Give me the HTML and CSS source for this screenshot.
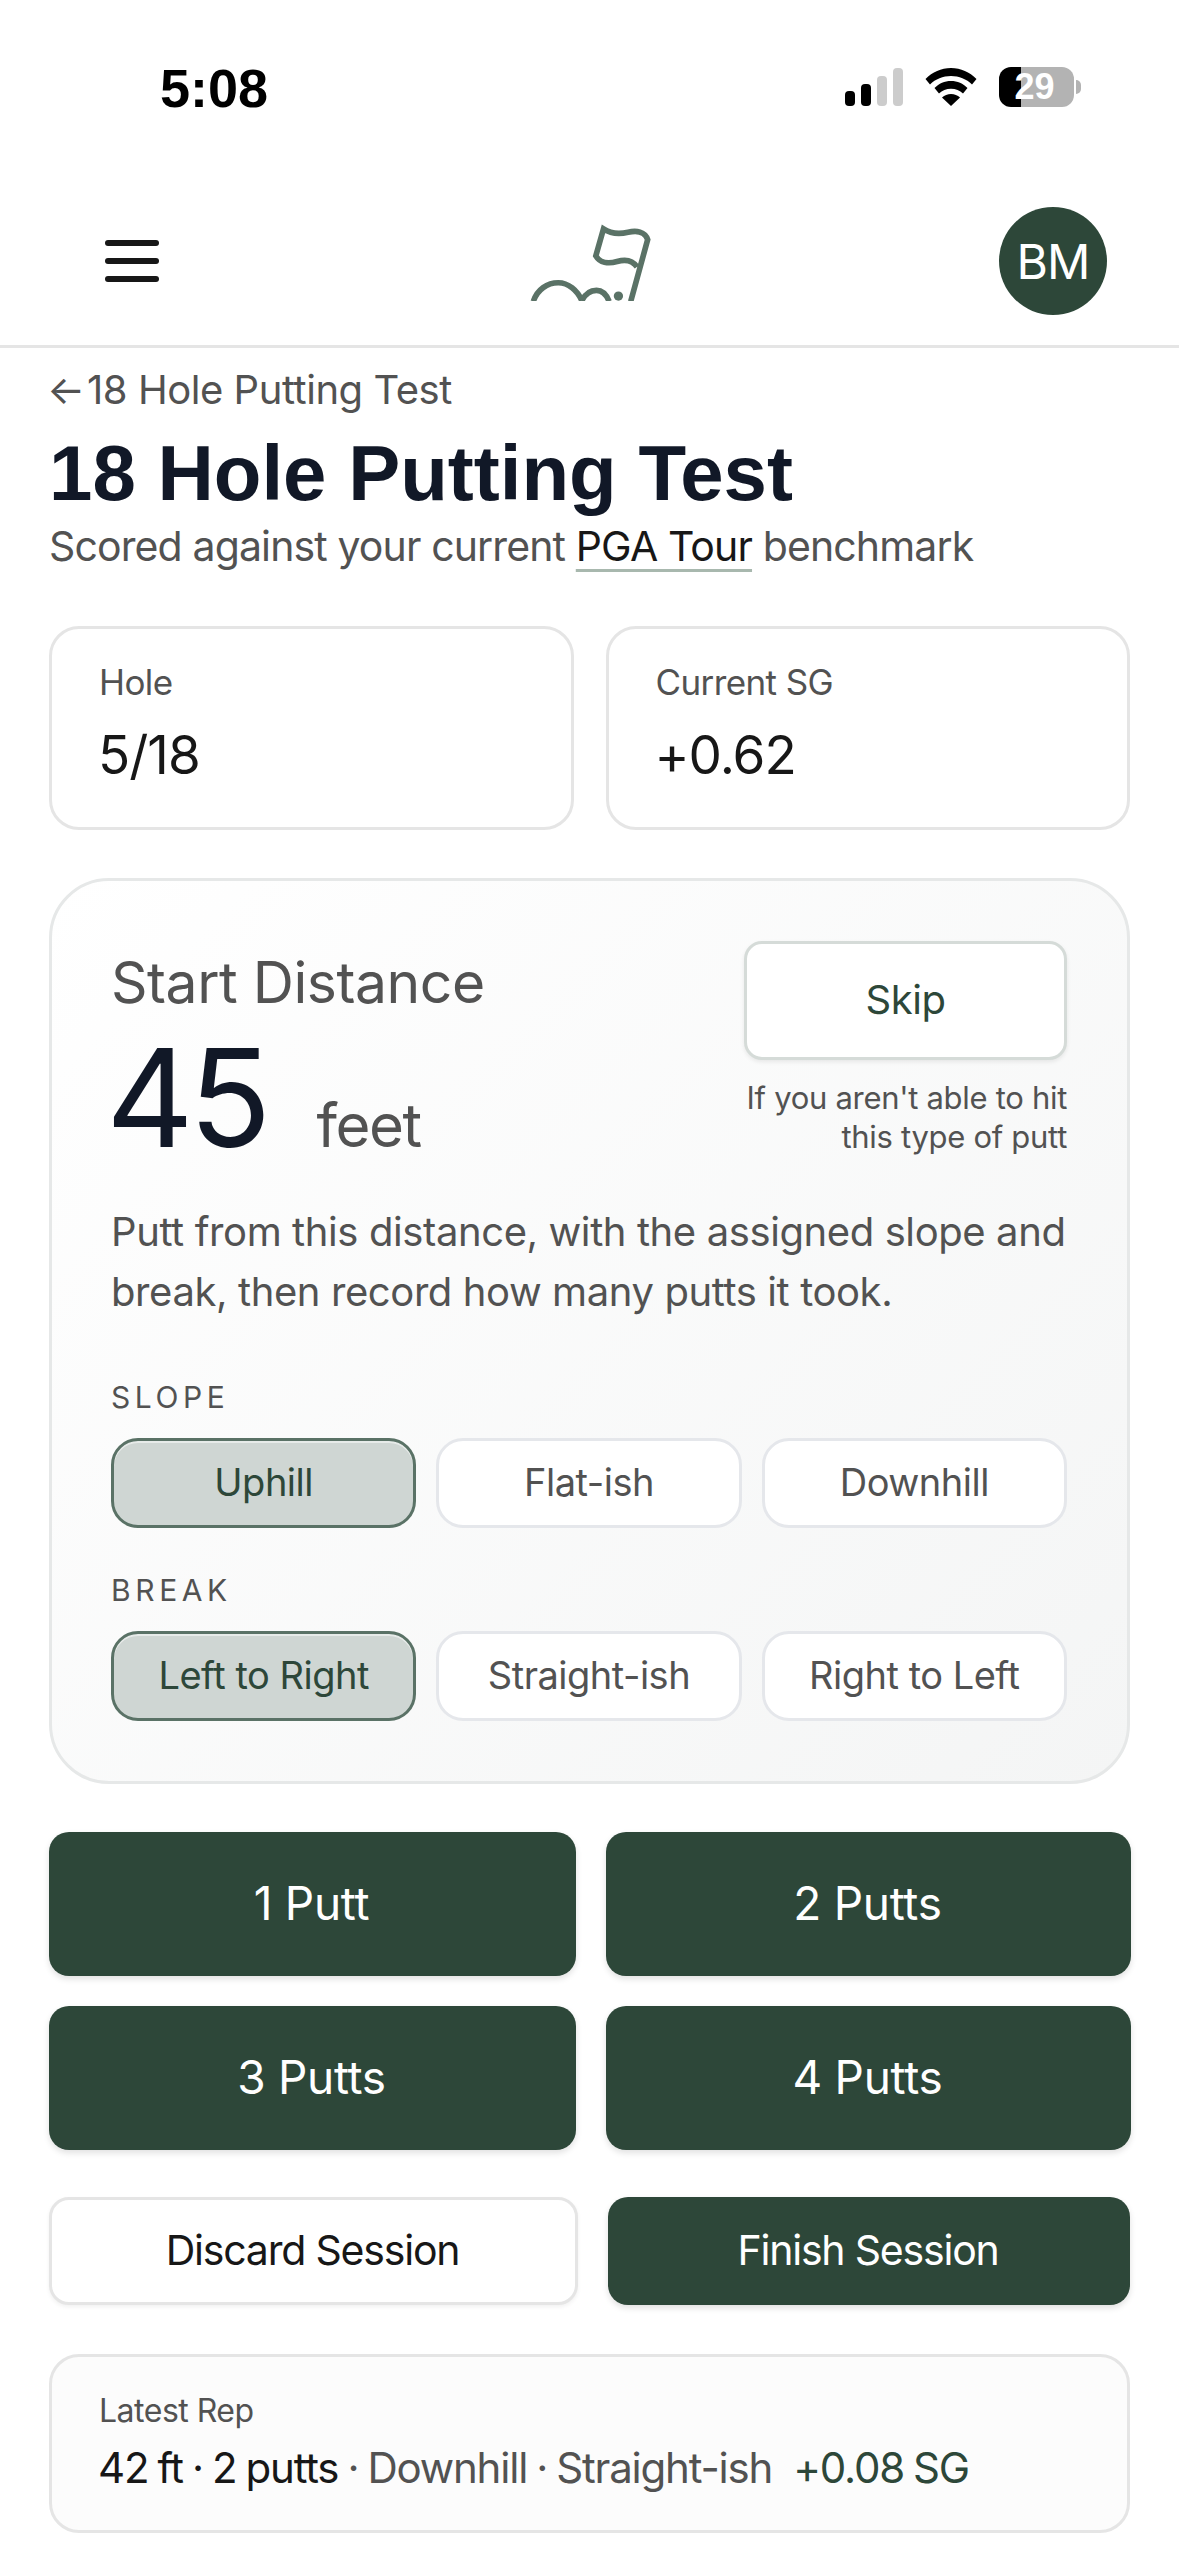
FILE: index.html
```html
<!DOCTYPE html>
<html lang="en">
<head>
<meta charset="utf-8">
<title>18 Hole Putting Test</title>
<link rel="stylesheet" href="styles.css">
</head>
<body>
<div class="status">
  <span class="time">5:08</span>
  <div class="status-icons">
    <svg class="signal" viewBox="0 0 58 38" width="58" height="38"><rect x="0" y="23" width="10" height="15" rx="4" fill="#000"/><rect x="16" y="16" width="10" height="22" rx="4" fill="#000"/><rect x="32" y="8" width="10" height="30" rx="4" fill="#ccc"/><rect x="48" y="0" width="10" height="38" rx="4" fill="#ccc"/></svg>
    <svg class="wifi" viewBox="0 0 52 38" width="52" height="38"><path d="M26 0C16 0 7.500 4 .5 11l4.500 5.500C10.500 11 18 8 26 8s15.500 3 21 8.500L51.500 11C44.500 4 36 0 26 0Z" fill="#000"/><path d="M26 13c-6.500 0-12 2.500-16.500 7l4.500 5.500c3.200-3 7.300-4.800 12-4.800s8.800 1.800 12 4.800l4.500-5.500C38 15.500 32.500 13 26 13Z" fill="#000"/><path d="M26 26c-3.500 0-6.500 1.300-9 3.500L26 38l9-8.500C32.500 27.300 29.500 26 26 26Z" fill="#000"/></svg>
    <div class="battery-wrap"><div class="battery">29</div><span class="nub"></span></div>
  </div>
</div>
<header class="topbar">
  <div class="burger"><span></span><span></span><span></span></div>
  <svg class="logo" viewBox="90 100 370 230" width="123" height="77"><g fill="none" stroke="#5a7266" stroke-width="17"><path d="M393 332 444 146C436 122 410 118 385 124 360 130 335 130 311 114L288 195C300 216 325 220 352 212 375 205 398 208 412 228"/><path d="M100 332C112 296 142 276 175 276 205 276 232 298 246 330"/><path d="M246 330C256 310 272 299 290 299 308 299 320 312 328 332"/></g><circle cx="356" cy="316" r="14" fill="#5a7266"/></svg>
  <div class="avatar">BM</div>
</header>
<main class="page">
  <a class="back"><span class="arrow">←</span> 18 Hole Putting Test</a>
  <h1 class="title">18 Hole Putting Test</h1>
  <p class="sub">Scored against your current <span class="bench">PGA Tour</span> benchmark</p>

  <section class="stats">
    <div class="stat"><div class="stat-label">Hole</div><div class="stat-value">5/18</div></div>
    <div class="stat"><div class="stat-label">Current SG</div><div class="stat-value">+0.62</div></div>
  </section>

  <section class="panel">
    <div class="panel-head">
      <div class="dist">
        <div class="dist-label">Start Distance</div>
        <div class="dist-row"><span class="dist-num">45</span><span class="dist-unit">feet</span></div>
      </div>
      <div class="skip-col">
        <button class="skip">Skip</button>
        <p class="hint">If you aren't able to hit<br>this type of putt</p>
      </div>
    </div>
    <p class="instr">Putt from this distance, with the assigned slope and break, then record how many putts it took.</p>
    <div class="group-label">SLOPE</div>
    <div class="pills">
      <button class="pill on">Uphill</button>
      <button class="pill">Flat-ish</button>
      <button class="pill">Downhill</button>
    </div>
    <div class="group-label second">BREAK</div>
    <div class="pills">
      <button class="pill on">Left to Right</button>
      <button class="pill">Straight-ish</button>
      <button class="pill">Right to Left</button>
    </div>
  </section>

  <section class="putts">
    <button class="putt">1 Putt</button>
    <button class="putt">2 Putts</button>
    <button class="putt">3 Putts</button>
    <button class="putt">4 Putts</button>
  </section>

  <section class="actions">
    <button class="act ghost">Discard Session</button>
    <button class="act solid">Finish Session</button>
  </section>

  <section class="latest">
    <div class="latest-label">Latest Rep</div>
    <div class="latest-line"><span class="dark">42 ft · 2 putts</span> · Downhill · Straight-ish <span class="green">+0.08 SG</span></div>
  </section>
</main>
</body>
</html>
```

FILE: styles.css
```css
* { box-sizing: border-box; }
html, body { margin: 0; padding: 0; background: #fff; }
body { width: 1179px; height: 2556px; overflow: hidden; font-family: "Inter", "Liberation Sans", sans-serif; color: #525252; }
button { font-family: inherit; cursor: pointer; padding: 0; }
p { margin: 0; }

.status { height: 177px; display: flex; justify-content: space-between; align-items: flex-start; padding: 58px 98px 0 160px; }
.time { font-family: "Liberation Sans", sans-serif; font-weight: 700; font-size: 54px; line-height: 60px; color: #000; }
.status-icons { display: flex; align-items: center; gap: 22px; padding-top: 9px; }
.battery-wrap { display: flex; align-items: center; gap: 2px; }
.battery { width: 75px; height: 40px; border-radius: 12px; background: linear-gradient(90deg, #000 0 22px, #b3b3b3 22px); color: #fff; font-family: "Liberation Sans", sans-serif; font-weight: 700; font-size: 36px; line-height: 40px; text-align: center; padding-right: 4px; }
.nub { width: 5px; height: 14px; background: #b3b3b3; border-radius: 0 5px 5px 0; }

.topbar { height: 171px; border-bottom: 3px solid #e5e5e5; display: grid; grid-template-columns: 1fr auto 1fr; align-items: center; padding: 0 72px 0 72px; }
.burger { margin-left: 33px; width: 54px; display: flex; flex-direction: column; gap: 12px; }
.burger span { display: block; height: 6px; border-radius: 3px; background: #171717; }
.logo { display: block; margin: 2px 0 0 3px; }
.avatar { justify-self: end; width: 108px; height: 108px; border-radius: 50%; background: #2d4739; color: #fff; font-size: 48px; display: flex; align-items: center; justify-content: center; letter-spacing: -1px; }

.page { padding: 19px 49px 0; }
.back { display: block; font-size: 40px; line-height: 46px; letter-spacing: -.45px; margin-left: -2px; color: #525252; }
.arrow { letter-spacing: -9px; }
.title { margin: 18px 0 0; font-family: "Liberation Sans", sans-serif; font-weight: 700; font-size: 78px; line-height: 84px; color: #111827; }
.sub { font-size: 41px; line-height: 50px; letter-spacing: -.87px; margin-top: 6px; color: #525252; }
.bench { color: #171717; text-decoration: underline; text-decoration-color: #a8b8ae; text-decoration-thickness: 3px; text-underline-offset: 8px; }

.stats { display: grid; grid-template-columns: 1fr 1fr; gap: 32px; margin-top: 55px; }
.stat { height: 204px; border: 3px solid #e5e5e5; border-radius: 30px; padding: 32px 47px; background: #fff; }
.stat-label { font-size: 35px; line-height: 44px; letter-spacing: -.6px; margin-top: -1px; color: #525252; }
.stat-value { font-size: 53px; line-height: 60px; letter-spacing: -1px; color: #171717; margin-top: 21px; margin-left: -1px; }

.panel { margin-top: 48px; height: 906px; border: 3px solid #e6e8e8; border-radius: 60px; padding: 60px 60px 0 59px; background: linear-gradient(135deg, #fff 0%, #f4f5f5 100%); }
.panel-head { display: flex; justify-content: space-between; }
.dist-label { font-size: 57px; line-height: 68px; letter-spacing: -.45px; margin-top: 8px; color: #525252; }
.dist-row { display: flex; align-items: baseline; gap: 50px; margin-top: 13px; }
.dist-num { font-size: 136px; line-height: 136px; letter-spacing: -5px; margin-left: -5px; color: #111827; }
.dist-unit { font-size: 60px; letter-spacing: -1.5px; color: #525252; }
.skip-col { width: 323px; display: flex; flex-direction: column; align-items: stretch; }
.skip { height: 119px; border: 3px solid #d5dbd8; border-radius: 18px; background: #fff; color: #2d4739; font-size: 40px; letter-spacing: -.5px; padding-bottom: 3px; box-shadow: 0 2px 4px rgba(0,0,0,.08); }
.hint { text-align: right; font-size: 31px; line-height: 39px; letter-spacing: -.3px; margin-top: 18px; white-space: nowrap; color: #525252; }
.instr { font-size: 40px; line-height: 60px; letter-spacing: -.4px; margin-top: 36px; color: #525252; }
.group-label { font-size: 30px; line-height: 36px; letter-spacing: 4.6px; margin-top: 57px; color: #525252; }
.group-label.second { margin-top: 44px; }
.pills { display: grid; grid-template-columns: repeat(3, 1fr); gap: 20px; margin-top: 23px; }
.pill { height: 90px; border: 3px solid #e5e7eb; border-radius: 27px; background: #fff; color: #525252; font-size: 38px; letter-spacing: -.5px; padding-bottom: 2px; }
.pill.on { background: #cfd6d3; border-color: #5a7266; color: #2d4739; box-shadow: inset 0 2px 0 rgba(255,255,255,.5); }

.putts { display: grid; grid-template-columns: 527px 525px; column-gap: 30px; row-gap: 30px; margin-top: 48px; }
.putt { height: 144px; border: 0; border-radius: 20px; background: #2d4739; color: #fff; font-size: 46px; letter-spacing: -.3px; padding: 0 2px 3px 0; box-shadow: 0 3px 6px rgba(0,0,0,.12); }

.actions { display: grid; grid-template-columns: 529px 522px; column-gap: 30px; margin-top: 47px; }
.act { height: 108px; border-radius: 20px; font-size: 41px; letter-spacing: -1.2px; padding: 0 2px 2px 0; }
.ghost { background: #fff; border: 3px solid #e5e5e5; color: #171717; box-shadow: 0 2px 4px rgba(0,0,0,.06); }
.solid { background: #2d4739; border: 0; color: #fff; box-shadow: 0 3px 6px rgba(0,0,0,.12); }

.latest { margin-top: 49px; height: 179px; border: 3px solid #e5e5e5; border-radius: 30px; background: #fcfcfc; padding: 34px 47px; }
.latest-label { font-size: 32px; line-height: 40px; letter-spacing: -.5px; color: #525252; }
.latest-line { font-size: 42px; line-height: 54px; letter-spacing: -1.2px; word-spacing: -1.5px; margin: 10px 0 0 -1px; color: #525252; white-space: nowrap; }
.dark { color: #171717; }
.green { color: #2d4739; margin-left: 12px; }
```
